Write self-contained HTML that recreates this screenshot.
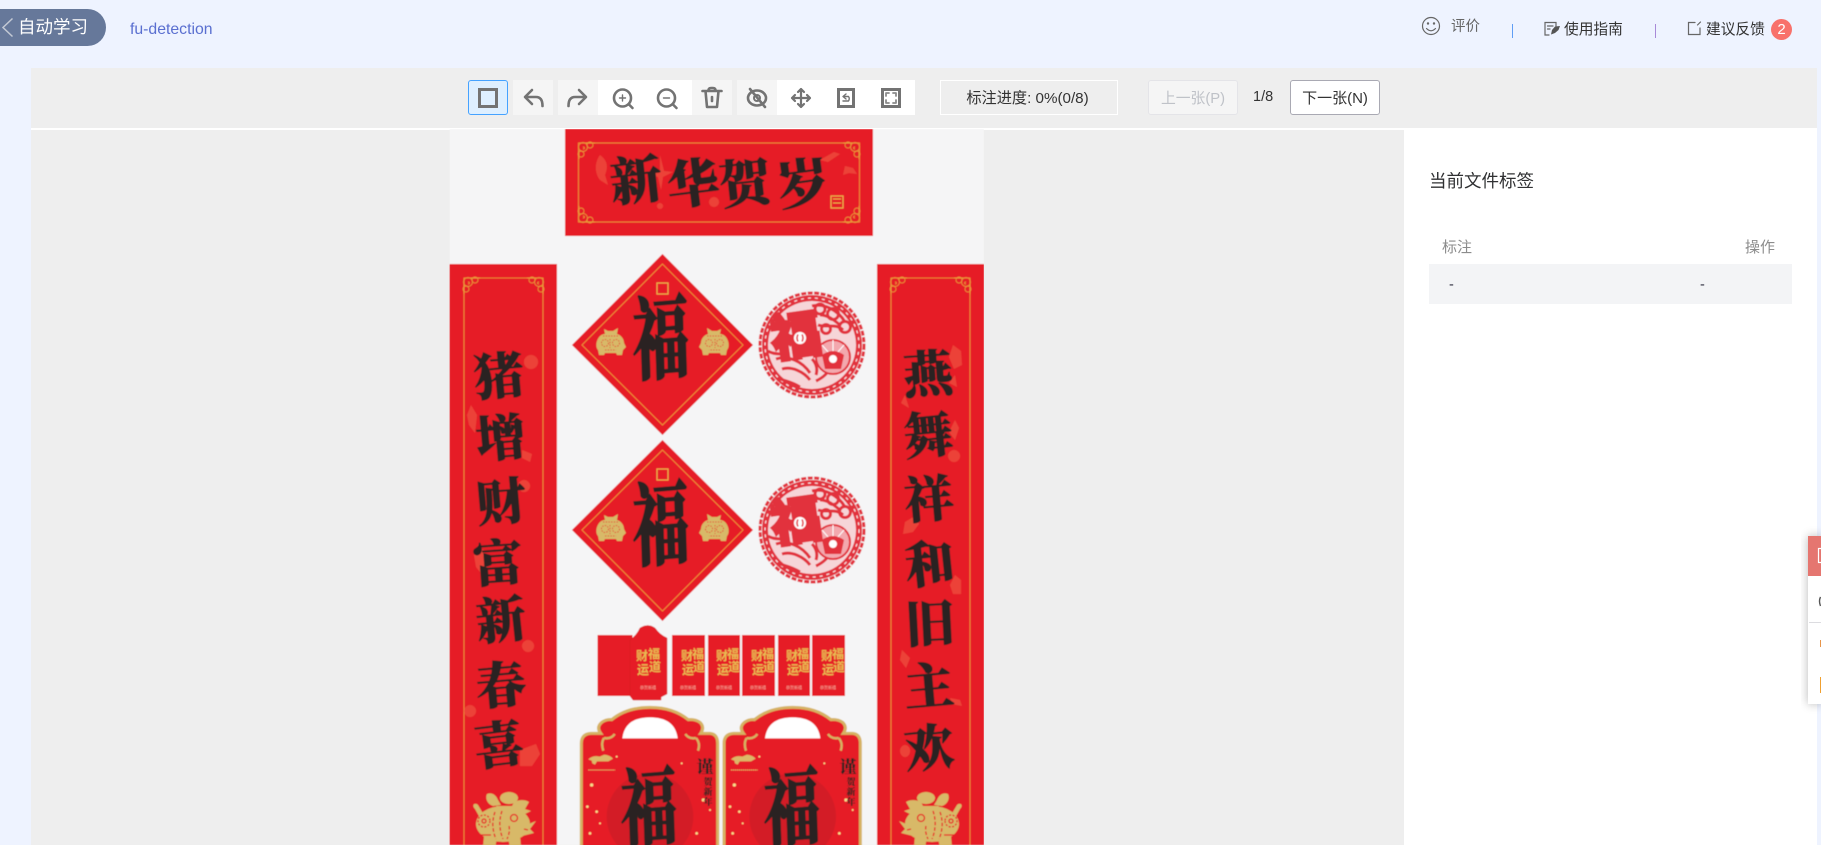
<!DOCTYPE html>
<html lang="zh-CN">
<head>
<meta charset="utf-8">
<title>fu-detection</title>
<style>
html,body{margin:0;padding:0;width:1821px;height:845px;overflow:hidden;background:#eef3ff;font-family:"Liberation Sans","Noto Sans CJK SC",sans-serif;color:#333}
.a{position:absolute;white-space:nowrap}
svg{position:absolute;left:0;top:0}
.t{display:flex;align-items:center;justify-content:center;box-sizing:border-box}
</style>
</head>
<body>
<!-- header -->
<div class="a" style="left:-20px;top:9px;width:126px;height:37px;background:#66789a;border-radius:0 19px 19px 0"></div>
<div class="a" style="left:18px;top:9px;height:37px;line-height:36px;font-size:17.5px;color:#fff">自动学习</div>
<div class="a" style="left:130px;top:20px;line-height:20px;font-size:15.8px;color:#5a6fd0">fu-detection</div>

<div class="a" style="left:1451px;top:17px;line-height:20px;font-size:14.5px;color:#666">评价</div>
<div class="a" style="left:1564px;top:20px;line-height:20px;font-size:14.7px;color:#333">使用指南</div>
<div class="a" style="left:1706px;top:20px;line-height:20px;font-size:14.7px;color:#333">建议反馈</div>
<div class="a t" style="left:1771px;top:19px;width:21px;height:21px;border-radius:50%;background:#f8716b;color:#fff;font-size:15px">2</div>
<div class="a" style="left:1512px;top:24px;width:1px;height:14px;background:#5f9df5"></div>
<div class="a" style="left:1655px;top:24px;width:1px;height:14px;background:#a88ad8"></div>

<!-- main -->
<div class="a" style="left:31px;top:68px;width:1786px;height:60px;background:#eee"></div>
<div class="a" style="left:31px;top:128px;width:1373px;height:2px;background:#fff"></div>
<div class="a" style="left:31px;top:130px;width:1373px;height:715px;background:#eee"></div>
<div class="a" style="left:1404px;top:128px;width:413px;height:717px;background:#fff"></div>

<!-- toolbar -->
<div class="a" style="left:468px;top:80px;width:40px;height:35px;box-sizing:border-box;background:#deefff;border:1px solid #45a2ff;border-radius:3px"></div>
<div class="a" style="left:513px;top:80px;width:40px;height:35px;background:#f5f5f5"></div>
<div class="a" style="left:558px;top:80px;width:40px;height:35px;background:#f5f5f5"></div>
<div class="a" style="left:598px;top:80px;width:94px;height:35px;background:#fff"></div>
<div class="a" style="left:692px;top:80px;width:40px;height:35px;background:#f5f5f5"></div>
<div class="a" style="left:737px;top:80px;width:40px;height:35px;background:#f5f5f5"></div>
<div class="a" style="left:777px;top:80px;width:138px;height:35px;background:#fff"></div>

<div class="a t" style="left:940px;top:80px;width:178px;height:35px;border:1px solid #fff;font-size:15.2px;color:#333;padding:0 3px 1px 0">标注进度: 0%(0/8)</div>
<div class="a t" style="left:1148px;top:80px;width:90px;height:35px;background:#f5f5f5;border:1px solid #e4e4e8;border-radius:3px;font-size:14.8px;color:#bfc2c8">上一张(P)</div>
<div class="a" style="left:1253px;top:87px;line-height:20px;font-size:14.5px;color:#333">1/8</div>
<div class="a t" style="left:1290px;top:80px;width:90px;height:35px;background:#fff;border:1px solid #a9a9b3;border-radius:3px;font-size:15px;color:#333;padding-bottom:1px">下一张(N)</div>

<!-- right panel -->
<div class="a" style="left:1429px;top:170px;line-height:22px;font-size:17.5px;color:#303133">当前文件标签</div>
<div class="a" style="left:1442px;top:238px;line-height:20px;font-size:15px;color:#8c8c8c">标注</div>
<div class="a" style="left:1745px;top:238px;line-height:20px;font-size:15px;color:#8c8c8c">操作</div>
<div class="a" style="left:1429px;top:264px;width:363px;height:40px;background:#f3f4f6"></div>
<div class="a" style="left:1449px;top:275px;line-height:20px;font-size:14.5px;color:#334">-</div>
<div class="a" style="left:1700px;top:275px;line-height:20px;font-size:14.5px;color:#334">-</div>

<!-- image + icons -->
<svg width="1821" height="845" viewBox="0 0 1821 845" xmlns="http://www.w3.org/2000/svg">
<defs>
<filter id="soft" x="-2%" y="-2%" width="104%" height="104%"><feGaussianBlur stdDeviation=".45"/></filter>
<filter id="sh" x="-50%" y="-20%" width="200%" height="140%"><feGaussianBlur stdDeviation="5"/></filter>
<clipPath id="pic"><rect x="449.5" y="129" width="534.5" height="716"/></clipPath>
<symbol id="pig" viewBox="0 0 66 60" overflow="visible">
  <g fill="#d8b968">
    <ellipse cx="33" cy="36" rx="27" ry="18"/>
    <path d="M5 21c-4-4 0-7 3-4l6 10-4 3zM54 38l12-5-6 8 4 4-12 3zM14 48l-1 11h12l2-8zM38 50l2 9h11l-1-12z"/>
    <ellipse cx="39" cy="10" rx="9" ry="6"/>
    <path d="M17 6c5-2 9 1 11 6l3 5-8 1c-6-2-8-8-6-12zM44 14c6-3 12-2 15 0l-4 7 6 2-8 4-6-4-8 1z"/>
    <path d="M26 18h25l-6 7H30z"/>
  </g>
  <g fill="none" stroke="#e61f27" stroke-width="1.300">
    <circle cx="14" cy="33" r="6" stroke-dasharray="2 1.500"/><circle cx="14" cy="33" r="2"/>
    <circle cx="44" cy="30" r="3.500"/>
    <path d="M25 24c-3 8-3 18 1 27M32 23c-3 8-3 19 1 28M39 38c1 4 0 9-2 13" stroke-dasharray="3.500 2"/>
    <path d="M9 47h12M54 41l4 1"/>
  </g>
</symbol>
<symbol id="smallpig" viewBox="0 0 31 27" overflow="visible">
  <path d="M2 13C4 7 8 6 10 6L9 1 13 3H18L23 0 22 6C26 7 29 11 29 15L31 19 28 22 27 27H22L21 25H10L9 27H4L3 22C1 20 1 16 2 13Z" fill="#d8b968"/>
  <g fill="none" stroke="#e61f27" stroke-width=".8" stroke-dasharray="1.400 1.300"><circle cx="10" cy="15" r="3.500"/><circle cx="21" cy="15" r="3.500"/><path d="M8 8h15M10 22h11M15 11v9"/></g>
</symbol>
<symbol id="swirl" viewBox="0 0 18 18" overflow="visible">
  <g fill="none" stroke="#e9a23c" stroke-width=".7"><circle cx="6" cy="6" r="4.500"/><circle cx="13" cy="4" r="3"/><circle cx="4" cy="13" r="3"/><path d="M6 6c2 0 2 2 0 2M2 18V9M18 2H9"/></g>
</symbol>
<symbol id="cut" viewBox="-55 -55 110 110" overflow="visible">
  <circle r="50" fill="#e2333c"/>
  <circle r="52" fill="none" stroke="#e2333c" stroke-width="3" stroke-dasharray="5 1.500"/>
  <circle r="44" fill="#f6d5d8"/>
  <circle r="47" fill="none" stroke="#f8e5e6" stroke-width="1.200" stroke-dasharray="3 4"/>
  <g fill="none" stroke="#e2333c" stroke-width="3">
    <path d="M0-39c12-3 26 4 33 16M8-30c8 0 14 5 20 10M6-20c9 3 18-2 25 5M-36 14c12-4 26 2 34 14M-30 24c10-3 22 3 28 11M4 36c8-4 12-8 14-14M-32 34c6 2 12 3 20 8"/>
    <circle cx="8" cy="-36" r="5"/><circle cx="21" cy="-31" r="5.500"/><circle cx="33" cy="-18" r="5.500"/><circle cx="14" cy="-16" r="4.500"/>
    <path d="M-44 6c6 4 12 2 18 4M0 14c4 4 6 10 4 16"/>
  </g>
  <circle cx="21" cy="12" r="17" fill="#f3a8ae" stroke="#e2333c" stroke-width="2"/>
  <path d="M21-5L21 6M10 0L17 8M32 0L25 8" stroke="#fff" stroke-width="1"/>
  <path d="M10 10Q21 2 32 10L29 24H13Z" fill="#e2333c"/>
  <circle cx="21" cy="14" r="5" fill="#fff" stroke="#e2333c" stroke-width="2"/>
</symbol>
</defs>

<g clip-path="url(#pic)"><g filter="url(#soft)">
<rect x="449.5" y="129" width="534.5" height="716" fill="#f5f5f6"/>

<!-- banner -->
<rect x="565" y="129" width="308" height="107" fill="#e61f27"/>
<rect x="578.5" y="143" width="281" height="79" fill="none" stroke="#eca13d" stroke-width=".8"/>
<use href="#swirl" x="577" y="141" width="18" height="18"/>
<use href="#swirl" transform="translate(861 141) scale(-1 1)" width="18" height="18"/>
<use href="#swirl" transform="translate(577 224) scale(1 -1)" width="18" height="18"/>
<use href="#swirl" transform="translate(861 224) scale(-1 -1)" width="18" height="18"/>
<g fill="#ef5240" opacity=".7">
  <path d="M600 155c8 6 8 12 5 20l3 10-8-5c-6-8-5-18 0-25zM660 155l4 16 9 1-10 5-2 13-3-13-9-3 11-4zM820 160l14-8 6 2-12 8zM845 166l8 2 4 6-8-1-6 2z"/>
  <circle cx="714" cy="202" r="5"/><circle cx="660" cy="206" r="3"/>
</g>
<rect x="831" y="196" width="12" height="12" fill="none" stroke="#e9b04a" stroke-width="1.200"/><path d="M833 199h8M833 203h8" stroke="#e9b04a"/>
<g font-family="'Noto Serif CJK SC','Noto Sans CJK SC',serif" font-weight="900" fill="#2a2422" stroke="#2a2422" stroke-width=".7" text-anchor="middle" font-size="52">
  <text x="636" y="199" transform="rotate(-6 636 180)">新</text>
  <text x="693" y="202" transform="rotate(-7 693 183)">华</text>
  <text x="745" y="202" transform="rotate(-6 745 183)">贺</text>
  <text x="803" y="202" transform="rotate(-8 803 183)">岁</text>
</g>

<!-- couplets -->
<rect x="449.5" y="264" width="107.5" height="581" fill="#e61f27"/>
<rect x="877" y="264" width="107" height="581" fill="#e61f27"/>
<path d="M464 845V278H543V845M891 845V278H970V845" fill="none" stroke="#eca13d" stroke-width=".8"/>
<use href="#swirl" x="462" y="276" width="18" height="18"/>
<use href="#swirl" transform="translate(545 276) scale(-1 1)" width="18" height="18"/>
<use href="#swirl" x="889" y="276" width="18" height="18"/>
<use href="#swirl" transform="translate(972 276) scale(-1 1)" width="18" height="18"/>
<g fill="#ef5240" opacity=".7">
  <circle cx="531" cy="362" r="7"/><path d="M471 405l6 10-2 18-6-8-2-10zM522 450l10 4-2 8-8-4zM524 480a6 6 0 1 0 .1 0zM478 545l6 6 4 14-4 12-8-10-2-12zM528 640a6 6 0 1 0 .1 0zM470 705a6 6 0 1 0 .1 0zM520 750l16-6 4 10-8 12-12 0z"/>
  <path d="M953 345l8 6 1 14-8 4-5-12zM955 375l-6 8 8 4zM905 395l-4 8 8 5zM955 420l4 8-4 12-6-8zM954 450a6 6 0 1 0 .1 0zM905 522l10-6 4 8-6 8-10 2zM955 575l6 5v14h-8l-3-9zM902 650l8 8-4 10-6-8zM950 698l10 2 2 6-10-2zM905 745a5 6 0 1 0 .1 0z"/>
</g>
<g font-family="'Noto Serif CJK SC','Noto Sans CJK SC',serif" font-weight="900" fill="#2a2422" stroke="#2a2422" stroke-width=".7" text-anchor="middle" font-size="50">
  <text x="499" y="394" transform="rotate(-5 499 377)">猪</text>
  <text x="501" y="456" transform="rotate(-5 501 439)">增</text>
  <text x="501" y="520" transform="rotate(-5 501 502)">财</text>
  <text x="498" y="581" transform="rotate(-4 498 564)">富</text>
  <text x="501" y="638" transform="rotate(-6 501 620)">新</text>
  <text x="501" y="703" transform="rotate(-5 501 685)">春</text>
  <text x="499" y="763" transform="rotate(-7 499 745)">喜</text>
  <text x="928" y="392" transform="rotate(-4 928 375)">燕</text>
  <text x="928" y="453" transform="rotate(-6 928 435)">舞</text>
  <text x="929" y="517" transform="rotate(-5 929 500)">祥</text>
  <text x="930" y="582" transform="rotate(-6 930 565)">和</text>
  <text x="930" y="642" transform="rotate(-3 930 624)">旧</text>
  <text x="929" y="704" transform="rotate(-5 929 687)">主</text>
  <text x="929" y="766" transform="rotate(-6 929 749)">欢</text>
</g>
<use href="#pig" x="470" y="788" width="66" height="60"/>
<use href="#pig" transform="translate(965 788) scale(-1 1)" width="66" height="60"/>

<!-- diamonds -->
<g>
  <path d="M662.5 254L753 345 662.5 435 572 345Z" fill="#e61f27"/>
  <path d="M662.5 264L743 345 662.5 425 582 345Z" fill="none" stroke="#eca13d" stroke-width=".8"/>
  <rect x="657" y="283" width="11" height="11" fill="none" stroke="#e9b04a" stroke-width="1.200"/>
  <use href="#smallpig" x="595" y="328" width="31" height="27"/>
  <use href="#smallpig" transform="translate(730 328) scale(-1 1)" width="31" height="27"/>
</g>
<g>
  <path d="M662.5 440L753 530 662.5 621 572 530Z" fill="#e61f27"/>
  <path d="M662.5 450L743 530 662.5 611 582 530Z" fill="none" stroke="#eca13d" stroke-width=".8"/>
  <rect x="657" y="469" width="11" height="11" fill="none" stroke="#e9b04a" stroke-width="1.200"/>
  <use href="#smallpig" x="595" y="514" width="31" height="27"/>
  <use href="#smallpig" transform="translate(730 514) scale(-1 1)" width="31" height="27"/>
</g>
<g font-family="'Noto Serif CJK SC','Noto Sans CJK SC',serif" font-weight="900" fill="#2a2422" stroke="#2a2422" stroke-width="1.200" text-anchor="middle" font-size="56">
  <text transform="translate(662 371) scale(1 1.600) rotate(-3)">福</text>
  <text transform="translate(662 557) scale(1 1.600) rotate(-3)">福</text>
</g>

<!-- paper cuts -->
<use href="#cut" x="757" y="290" width="110" height="110"/>
<use href="#cut" x="757" y="475" width="110" height="110"/>
<g font-family="'Noto Sans CJK SC',sans-serif" font-weight="900" fill="#e2333c" stroke="#e2333c" stroke-width="3" text-anchor="middle" font-size="50">
  <text x="796" y="354" transform="rotate(-8 796 336)">福</text>
  <text x="796" y="539" transform="rotate(-8 796 521)">福</text>
</g>
<g fill="#fff" stroke="#e2333c" stroke-width="1.800">
  <circle cx="800" cy="338" r="7"/>
  <circle cx="800" cy="523" r="7"/>
</g>
<path d="M798 334.500q-2 3.500 0 7M802 334.500q2 3.500 0 7M798 519.500q-2 3.500 0 7M802 519.500q2 3.500 0 7" fill="none" stroke="#e2333c" stroke-width="1.600"/>

<!-- red envelopes -->
<g fill="#e61f27">
  <rect x="597.5" y="635" width="35" height="61"/>
  <path d="M630 640Q637 635 640 628 648 623 655 628 660 635 667 638V694L661 697V700H633L630 696Z" stroke="#d01922" stroke-width=".5"/>
  <rect x="672" y="635" width="33" height="61"/>
  <rect x="708" y="635" width="32" height="61"/>
  <rect x="742" y="635" width="33" height="61"/>
  <rect x="778" y="635" width="32" height="61"/>
  <rect x="812" y="635" width="33" height="61"/>
</g>
<g font-family="'Noto Sans CJK SC',sans-serif" font-weight="700" fill="#e8bd52" font-size="12" text-anchor="middle">
  <text x="642" y="660">财</text><text x="654" y="658">福</text><text x="643" y="674">运</text><text x="655" y="671">道</text>
  <text x="687" y="660">财</text><text x="698" y="658">福</text><text x="688" y="674">运</text><text x="699" y="671">道</text>
  <text x="722" y="660">财</text><text x="733" y="658">福</text><text x="723" y="674">运</text><text x="734" y="671">道</text>
  <text x="757" y="660">财</text><text x="768" y="658">福</text><text x="758" y="674">运</text><text x="769" y="671">道</text>
  <text x="792" y="660">财</text><text x="803" y="658">福</text><text x="793" y="674">运</text><text x="804" y="671">道</text>
  <text x="827" y="660">财</text><text x="838" y="658">福</text><text x="828" y="674">运</text><text x="839" y="671">道</text>
</g>
<g fill="#f5b5a5" font-size="4" text-anchor="middle" font-family="'Noto Sans CJK SC',sans-serif">
  <text x="648" y="689">恭贺新禧</text><text x="688" y="689">恭贺新禧</text><text x="724" y="689">恭贺新禧</text><text x="758" y="689">恭贺新禧</text><text x="794" y="689">恭贺新禧</text><text x="828" y="689">恭贺新禧</text>
</g>

<!-- bags -->
<g transform="translate(570 620) scale(.33333)">
  <g>
    <path d="M34 700V370Q34 342 62 340H92Q78 322 95 307 110 297 125 299 170 262 240 262 310 262 355 299 375 297 390 307 405 322 392 340H420Q443 342 443 370V700Z" fill="#e61f27" stroke="#d6b264" stroke-width="9"/>
    <path d="M134 342Q124 358 102 354M102 354Q92 370 100 392M346 342Q356 358 378 354M378 354Q392 370 384 392" fill="none" stroke="#d6b264" stroke-width="7"/>
    <path d="M157 355Q165 292 240 292 315 292 323 355Z" fill="#fff"/>
    <circle cx="240" cy="590" r="130" fill="#d31c25"/>
    <path d="M55 418q14-14 34-8l14-6q18 2 26 12l-14 8h-34l-6 10-8-4-2-8z" fill="#dcb868"/>
    <path d="M55 450h80" stroke="#dcb868" stroke-width="3" stroke-dasharray="4 2"/>
    <g fill="#f7dd8c"><circle cx="65" cy="495" r="5"/><circle cx="52" cy="560" r="4"/><circle cx="80" cy="575" r="4"/><circle cx="90" cy="610" r="3"/><circle cx="400" cy="540" r="5"/><circle cx="420" cy="570" r="3"/><circle cx="380" cy="640" r="4"/><circle cx="335" cy="430" r="3"/><circle cx="140" cy="410" r="3"/><circle cx="60" cy="640" r="4"/></g>
  </g>
  <g transform="translate(428 0)">
    <path d="M34 700V370Q34 342 62 340H92Q78 322 95 307 110 297 125 299 170 262 240 262 310 262 355 299 375 297 390 307 405 322 392 340H420Q443 342 443 370V700Z" fill="#e61f27" stroke="#d6b264" stroke-width="9"/>
    <path d="M134 342Q124 358 102 354M102 354Q92 370 100 392M346 342Q356 358 378 354M378 354Q392 370 384 392" fill="none" stroke="#d6b264" stroke-width="7"/>
    <path d="M157 355Q165 292 240 292 315 292 323 355Z" fill="#fff"/>
    <circle cx="240" cy="590" r="130" fill="#d31c25"/>
    <path d="M55 418q14-14 34-8l14-6q18 2 26 12l-14 8h-34l-6 10-8-4-2-8z" fill="#dcb868"/>
    <path d="M55 450h80" stroke="#dcb868" stroke-width="3" stroke-dasharray="4 2"/>
    <g fill="#f7dd8c"><circle cx="65" cy="495" r="5"/><circle cx="52" cy="560" r="4"/><circle cx="80" cy="575" r="4"/><circle cx="90" cy="610" r="3"/><circle cx="400" cy="540" r="5"/><circle cx="420" cy="570" r="3"/><circle cx="380" cy="640" r="4"/><circle cx="335" cy="430" r="3"/><circle cx="140" cy="410" r="3"/><circle cx="60" cy="640" r="4"/></g>
  </g>
</g>
<g font-family="'Noto Serif CJK SC','Noto Sans CJK SC',serif" font-weight="900" fill="#2a2422" stroke="#2a2422" stroke-width="1" text-anchor="middle">
  <text transform="translate(650 838) scale(1 1.500) rotate(-3)" font-size="56">福</text>
  <text transform="translate(793 838) scale(1 1.500) rotate(-3)" font-size="56">福</text>
  <g stroke="none"><text x="705" y="773" font-size="17">谨</text><text x="848" y="773" font-size="17">谨</text>
  <text x="708" y="785" font-size="9">贺</text><text x="708" y="795" font-size="9">新</text><text x="708" y="805" font-size="9">年</text>
  <text x="851" y="785" font-size="9">贺</text><text x="851" y="795" font-size="9">新</text><text x="851" y="805" font-size="9">年</text></g>
</g>
</g></g>

<!-- back chevron -->
<path d="M12.500 18.500L3 27.500 12.500 36.500" fill="none" stroke="#c3c9d4" stroke-width="1.500"/>

<!-- toolbar icons -->
<g fill="none" stroke="#737373" stroke-width="2.600" stroke-linecap="round" stroke-linejoin="round">
  <rect x="479.500" y="89.500" width="17" height="17" stroke-width="3" stroke-linejoin="miter"/>
  <path d="M532 90L525 97 532 104M525.500 97H536Q542.500 97 542.500 106"/>
  <path d="M579 90L586 97 579 104M585.500 97H575Q568.500 97 568.500 106"/>
  <circle cx="622.500" cy="98" r="8.500"/><path d="M629 104.500L632.500 108"/><path d="M619.500 98h6M622.500 95v6" stroke-width="1.400"/>
  <circle cx="666.500" cy="98" r="8.500"/><path d="M673 104.500L676.500 108"/><path d="M663.500 98h6" stroke-width="1.400"/>
  <path d="M702.500 91H721.500M705.500 91L707 107H717L718.500 91M708.500 90.500Q708.500 88 711 88H713Q715.500 88 715.500 90.500M712 97V101"/>
  <ellipse cx="757" cy="98" rx="9" ry="7.500"/><circle cx="757" cy="98" r="3" stroke-width="2"/><path d="M750 89L765 107"/>
  <path d="M801 89V107M792 98H810M798 92L801 89 804 92M798 104L801 107 804 104M795 95L792 98 795 101M807 95L810 98 807 101" stroke-width="2.200"/>
  <rect x="838.500" y="89.500" width="15" height="17" stroke-width="3" stroke-linejoin="miter"/>
  <path d="M846 94L843 96.500 846 99M843.500 96.500H848.500Q850 98.500 848.500 101H843" stroke-width="1.400"/>
  <rect x="882.500" y="89.500" width="17" height="17" stroke-width="3" stroke-linejoin="miter"/>
  <path d="M886 96V93H889M893 93H896V96M896 100V103H893M889 103H886V100" stroke="#8a8a8a" stroke-width="1.800"/>
</g>

<!-- header icons -->
<g fill="none" stroke="#666" stroke-width="1.200" stroke-linecap="round">
  <circle cx="1431" cy="26" r="8.500"/>
  <path d="M1426.500 28.500Q1431 33 1435.500 28.500"/>
  <circle cx="1428" cy="23.500" r=".6" fill="#666"/><circle cx="1434" cy="23.500" r=".6" fill="#666"/>
  <path d="M1556 26V22.500H1545V35H1549M1547.500 26H1553M1547.500 29H1550"/>
  <path d="M1560 26L1555 26.500 1552 30 1551 34.500 1555 33 1558.500 30Z" fill="#555" stroke="none"/>
  <path d="M1695 22.500H1688.500V34.500H1700V28M1697.500 25L1700.500 22"/>
</g>

<!-- floating widget -->
<rect x="1808" y="536" width="14" height="168" fill="#000" opacity=".28" filter="url(#sh)"/>
<rect x="1808" y="536" width="13" height="168" fill="#fff"/>
<rect x="1808" y="536" width="13" height="40" fill="#e57670"/>
<rect x="1818.500" y="548.500" width="5" height="14" fill="none" stroke="#fff" stroke-width="1.200"/>
<rect x="1809" y="622" width="12" height="1" fill="#dcdce0"/>
<path d="M1820.500 597Q1818.500 601 1820.500 606" fill="none" stroke="#555" stroke-width="1.400"/>
<rect x="1820" y="640" width="1" height="7" fill="#e8954a"/>
<rect x="1820" y="677" width="1" height="16" fill="#f0a030"/>
</svg>
</body>
</html>
